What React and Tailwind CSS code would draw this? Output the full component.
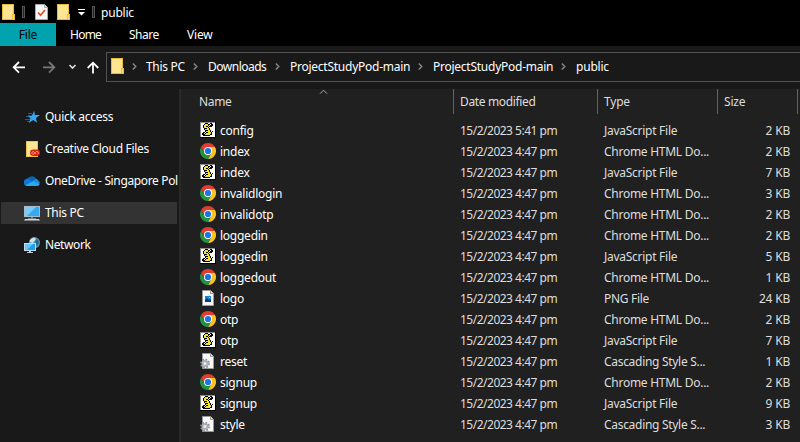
import React from "react";

const files = [
  ["js", "config", "15/2/2023 5:41 pm", "2 KB"],
  ["html", "index", "15/2/2023 4:47 pm", "2 KB"],
  ["js", "index", "15/2/2023 4:47 pm", "7 KB"],
  ["html", "invalidlogin", "15/2/2023 4:47 pm", "3 KB"],
  ["html", "invalidotp", "15/2/2023 4:47 pm", "2 KB"],
  ["html", "loggedin", "15/2/2023 4:47 pm", "2 KB"],
  ["js", "loggedin", "15/2/2023 4:47 pm", "5 KB"],
  ["html", "loggedout", "15/2/2023 4:47 pm", "1 KB"],
  ["png", "logo", "15/2/2023 4:47 pm", "24 KB"],
  ["html", "otp", "15/2/2023 4:47 pm", "2 KB"],
  ["js", "otp", "15/2/2023 4:47 pm", "7 KB"],
  ["css", "reset", "15/2/2023 4:47 pm", "1 KB"],
  ["html", "signup", "15/2/2023 4:47 pm", "2 KB"],
  ["js", "signup", "15/2/2023 4:47 pm", "9 KB"],
  ["css", "style", "15/2/2023 4:47 pm", "3 KB"],
];

const types = {
  js: ["JavaScript File", "tracking-[-0.27px]"],
  html: ["Chrome HTML Do...", "tracking-[-0.27px]"],
  png: ["PNG File", "tracking-[-0.3px]"],
  css: ["Cascading Style S...", "tracking-[-0.3px]"],
};

function Folder({ className = "" }) {
  return (
    <svg className={`shrink-0 ${className}`} width="13" height="16" viewBox="0 0 13 16">
      <path d="M0 0h12v10h1v6H0z" fill="#e9bd3c" />
      <path d="M1 1h10v9h-1v5H1z" fill="#ffe592" />
      <path d="M11 11h1v4h-1z" fill="#ffdf80" />
    </svg>
  );
}

const scroll = [
  "....kkk..kk..",
  "...kyyykk.kk.",
  "..kyyyyk.kkk.",
  "..kyykkykkk..",
  "..kyyyyk.....",
  "...kkkyyk....",
  "...kyyyyk....",
  "....kkkyyk...",
  "....kyyyyk.k.",
  "..kk.kkyyyk..",
  ".kk.kyyyyyk..",
  ".kkkyyyyykk..",
  "..kkkkkkk....",
];
const scrollInk = { k: "#000", y: "#f3e52f" };

function ScriptIcon() {
  return (
    <svg width="16" height="16" viewBox="0 0 16 16" shapeRendering="crispEdges">
      <path d="M0 0h16v16H0z" fill="#000" />
      <path d="M0 0h15v15H0z" fill="#8b8b8b" />
      <path d="M1 1h14v14H1z" fill="#fff" />
      {scroll.map((row, y) =>
        [...row].map((c, x) =>
          c === "." ? null : <rect key={`${x}-${y}`} x={x + 1} y={y + 1} width="1" height="1" fill={scrollInk[c]} />
        )
      )}
    </svg>
  );
}

function ChromeIcon() {
  return (
    <svg width="16" height="16" viewBox="0 0 16 16">
      <path d="M14.93 4A8 8 0 0 1 8 16L11.4 9.8 8 4z" fill="#fcc31e" />
      <path d="M1.07 4A8 8 0 0 0 8 16L11.4 10 8 8 4.6 10z" fill="#229342" />
      <path d="M8 4.1h6.98A8 8 0 0 0 1.07 4L4.6 10z" fill="#e33b2e" />
      <circle cx="8" cy="8" r="4" fill="#fff" />
      <circle cx="8" cy="8" r="3.1" fill="#1a73e8" />
    </svg>
  );
}

function Page({ children }) {
  return (
    <svg width="16" height="16" viewBox="0 0 16 16">
      <path d="M2.5.5h8l3 3v12h-11z" fill="#f8f8f8" stroke="#9a9a9a" />
      <path d="M10.5.5v3h3" fill="#ddd" stroke="#9a9a9a" />
      {children}
    </svg>
  );
}

function PngIcon() {
  return (
    <Page>
      <path d="M5 6h6v6H5z" fill="#1683d8" />
      <path d="M5 10l2-2 2 2 1-1 1 1v2H5z" fill="#0b3c78" />
      <path d="M9 7h1v1H9z" fill="#b5e2ff" />
    </Page>
  );
}

function CssIcon() {
  return (
    <Page>
      <circle cx="5" cy="10.5" r="3.9" fill="none" stroke="#8b9094" strokeWidth="2" strokeDasharray="1.6 1.46" />
      <circle cx="5" cy="10.5" r="2.5" fill="#eceeef" stroke="#a9afb3" strokeWidth="1.8" />
    </Page>
  );
}

const icons = { js: ScriptIcon, html: ChromeIcon, png: PngIcon, css: CssIcon };

function QuickIcon() {
  return (
    <svg width="16" height="16" viewBox="0 0 16 16">
      <path d="M4 4.5h4M2 7.5h4M1 10.5h5M3 12.5h3" stroke="#1a5f96" />
      <path d="M10.2 1.8l.7 4.2 5.1.1-4.1 2.8 1.2 4.8-3.9-2.6L5 14l1.5-4.6L3.8 6.6l4 .1z" fill="#35a8f4" />
    </svg>
  );
}

function CreativeIcon() {
  return (
    <svg width="16" height="16" viewBox="0 0 16 16">
      <path d="M2 0h12v16H2z" fill="#edc34d" />
      <path d="M3 1h10v14H3z" fill="#ffe592" />
      <rect x="6" y="8.5" width="10" height="6.5" rx="3.2" fill="#dc1f14" />
      <path d="M13.7 13.2c1-.6.8-2.9-1-2.9-1.2 0-2 3-3.4 3-1.8 0-2-2.7 0-2.7 1 0 1.5 1.5 2.5 2.5" fill="none" stroke="#ffc080" strokeWidth=".8" />
    </svg>
  );
}

function CloudIcon() {
  return (
    <svg width="16" height="16" viewBox="0 0 16 16">
      <path d="M3 8a5 5 0 0 1 9.4-2l2 5H2z" fill="#0864b8" />
      <path d="M0 10a3.5 3.5 0 0 1 5.6-3.6l6 4.6L3 13a3 3 0 0 1-3-3z" fill="#0f78d4" />
      <path d="M8 8.5l3-2.3c2-.8 3 .5 3.3 1.5A3 3 0 0 1 16 10.2l-2 1z" fill="#1490df" />
      <path d="M1.2 12.3L9 8.2l6.7 3A2.7 2.7 0 0 1 13.2 13H3.3c-.8 0-1.5-.2-2.1-.7z" fill="#2ba9ec" />
    </svg>
  );
}

function PcIcon() {
  return (
    <svg width="16" height="16" viewBox="0 0 16 16">
      <path d="M0 1h16v11H0z" fill="#a7bdc9" />
      <path d="M1 2h14v9H1z" fill="#35a9f2" />
      <path d="M1 2h11l-9 9H1z" fill="#79ccfa" />
      <path d="M7 12h2v1H7zM4 13h8v1H4z" fill="#77848c" />
      <path d="M1 14h14l1 1.5H0z" fill="#ced6da" />
    </svg>
  );
}

function NetworkIcon() {
  return (
    <svg width="16" height="16" viewBox="0 0 16 16">
      <circle cx="10.4" cy="5.7" r="5.6" fill="#5796b7" />
      <path d="M6 3.2C8 .5 10 .5 11 1l1 2-2 1-1 2-3-1z" fill="#cae5ef" />
      <path d="M12 2l2 1 1 3-2 3-2-3z" fill="#2e6685" />
      <path d="M0 6h12v8H0z" fill="#c8dce6" />
      <path d="M1 7h10v6H1z" fill="#1d9eef" />
      <path d="M1 7h8l-6 6H1z" fill="#67c6fa" />
      <path d="M5 14h2v1H5zM3 15h6v1H3z" fill="#c5ced3" />
    </svg>
  );
}

const nav = [
  [QuickIcon, "Quick access", "tracking-[-0.3px]"],
  [CreativeIcon, "Creative Cloud Files", "tracking-[-0.3px]"],
  [CloudIcon, "OneDrive - Singapore Pol", "tracking-[-0.36px]"],
  [PcIcon, "This PC", "tracking-[-0.3px]"],
  [NetworkIcon, "Network", "tracking-[-0.4px]"],
];

const crumbs = [
  ["This PC", "w-[38px] tracking-[-0.3px]"],
  ["Downloads", "w-[58px] tracking-[-0.5px]"],
  ["ProjectStudyPod-main", "w-[119px] tracking-[-0.25px]"],
  ["ProjectStudyPod-main", "w-[119px] tracking-[-0.25px]"],
  ["public", "w-[34px] tracking-[-0.2px]"],
];

function Grip() {
  return <div className="h-3 w-[3px] shrink-0 border border-[#555] bg-[#222]" />;
}

export default function App() {
  return (
    <div className="flex h-[442px] w-[800px] flex-col overflow-hidden bg-[#191919] font-['Noto_Sans','Open_Sans',sans-serif] text-[12px] leading-[21px] tracking-[-0.2px] whitespace-nowrap text-white">
      <div className="flex h-[23px] shrink-0 items-center bg-black pt-px pl-[2px]">
        <Folder className="mb-px" />
        <div className="ml-[7px]"><Grip /></div>
        <svg className="ml-[10px]" width="13" height="16" viewBox="0 0 13 16">
          <path d="M.5.5h9l3 3v12H.5z" fill="#f5f6f7" stroke="#aaa" />
          <path d="M9.5.5v3h3" fill="#ddd" stroke="#aaa" />
          <path d="M3 8.5l2.5 2.7L10 6" fill="none" stroke="#e64f20" strokeWidth="1.7" />
        </svg>
        <Folder className="ml-[9px]" />
        <svg className="ml-[8px]" width="7" height="8" viewBox="0 0 7 8">
          <path d="M0 1.5h7" stroke="#fff" />
          <path d="M0 4h7L3.5 7.5z" fill="#fff" />
        </svg>
        <div className="ml-[7px]"><Grip /></div>
        <span className="ml-[6px]">public</span>
      </div>

      <div className="flex h-[23px] shrink-0 items-center bg-black">
        <div className="flex h-full w-14 items-center justify-center bg-[#00a2ae] text-black">File</div>
        <span className="ml-[14px] w-[59px] tracking-[-0.75px]">Home</span>
        <span className="w-[58px] tracking-[-0.5px]">Share</span>
        <span>View</span>
      </div>

      <div className="flex h-[43px] shrink-0 items-start pt-[6px]">
        <svg className="shrink-0" width="106" height="30" viewBox="0 0 106 30" fill="none" strokeWidth="1.8">
          <path d="M25 15.3H14M19 10l-5.3 5.3L19 20.6" stroke="#fff" />
          <path d="M43 15.3h11M49 10l5.3 5.3L49 20.6" stroke="#777" />
          <path d="M69.5 13l3 3 3-3" stroke="#ddd" strokeWidth="1.6" />
          <path d="M93 21.5V11M87.7 16l5.3-5.3 5.3 5.3" stroke="#fff" />
        </svg>
        <div className="flex h-[30px] grow items-center border border-r-0 border-[#535353] pb-px pl-1">
          <Folder className="mb-px" />
          {crumbs.map(([label, width], i) => (
            <div key={i} className="flex items-center">
              <svg className={i ? "ml-[9px]" : "ml-2"} width="5" height="7" viewBox="0 0 5 7">
                <path d="M.8.5l3 3-3 3" fill="none" stroke="#888" strokeWidth="1.4" />
              </svg>
              <span className={`${i ? "ml-[10px]" : "ml-[9px]"} ${width}`}>{label}</span>
            </div>
          ))}
        </div>
      </div>

      <div className="flex grow">
        <div className="flex w-[179px] shrink-0 flex-col gap-[10px] overflow-hidden pt-[17px] pr-[2px] pl-px leading-[20px]">
          {nav.map(([Icon, label, track], i) => (
            <div key={label} className={`flex h-[22px] shrink-0 items-center pl-[23px] ${i === 3 ? "bg-[#333]" : ""}`}>
              <span className="shrink-0"><Icon /></span>
              <span className={`ml-[5px] ${track}`}>{label}</span>
            </div>
          ))}
        </div>
        <div className="w-[2px] shrink-0 bg-[#292929]" />
        <div className="grow bg-[#202020]">
          <div className="flex h-[25px] items-center text-[#dedede]">
            <div className="relative flex h-full w-[273px] items-center border-r border-[#636363] pl-[18px] tracking-[-0.35px]">
              Name
              <svg className="absolute top-0 left-[138px]" width="9" height="6" viewBox="0 0 9 6">
                <path d="M1 4.7l3.5-3.5L8 4.7" fill="none" stroke="#aaa" />
              </svg>
            </div>
            <div className="flex h-full w-36 items-center border-r border-[#636363] pl-[6px] tracking-[-0.35px]">Date modified</div>
            <div className="flex h-full w-[120px] items-center border-r border-[#636363] pl-[6px]">Type</div>
            <div className="flex h-full w-20 items-center border-r border-[#636363] pl-[6px]">Size</div>
          </div>
          <div className="pt-[6px]">
            {files.map(([kind, name, date, size], i) => {
              const Icon = icons[kind];
              return (
                <div key={i} className="flex h-[21px] items-start text-[#dedede]">
                  <span className="mt-[2px] ml-[19px] h-4 w-4 shrink-0"><Icon /></span>
                  <span className="ml-1 w-60 shrink-0 tracking-[-0.25px] text-white">{name}</span>
                  <span className="w-36 shrink-0 tracking-[-0.5px]">{date}</span>
                  <span className={`w-[120px] shrink-0 ${types[kind][1]}`}>{types[kind][0]}</span>
                  <span className="w-[66px] shrink-0 text-right">{size}</span>
                </div>
              );
            })}
          </div>
        </div>
      </div>
    </div>
  );
}
